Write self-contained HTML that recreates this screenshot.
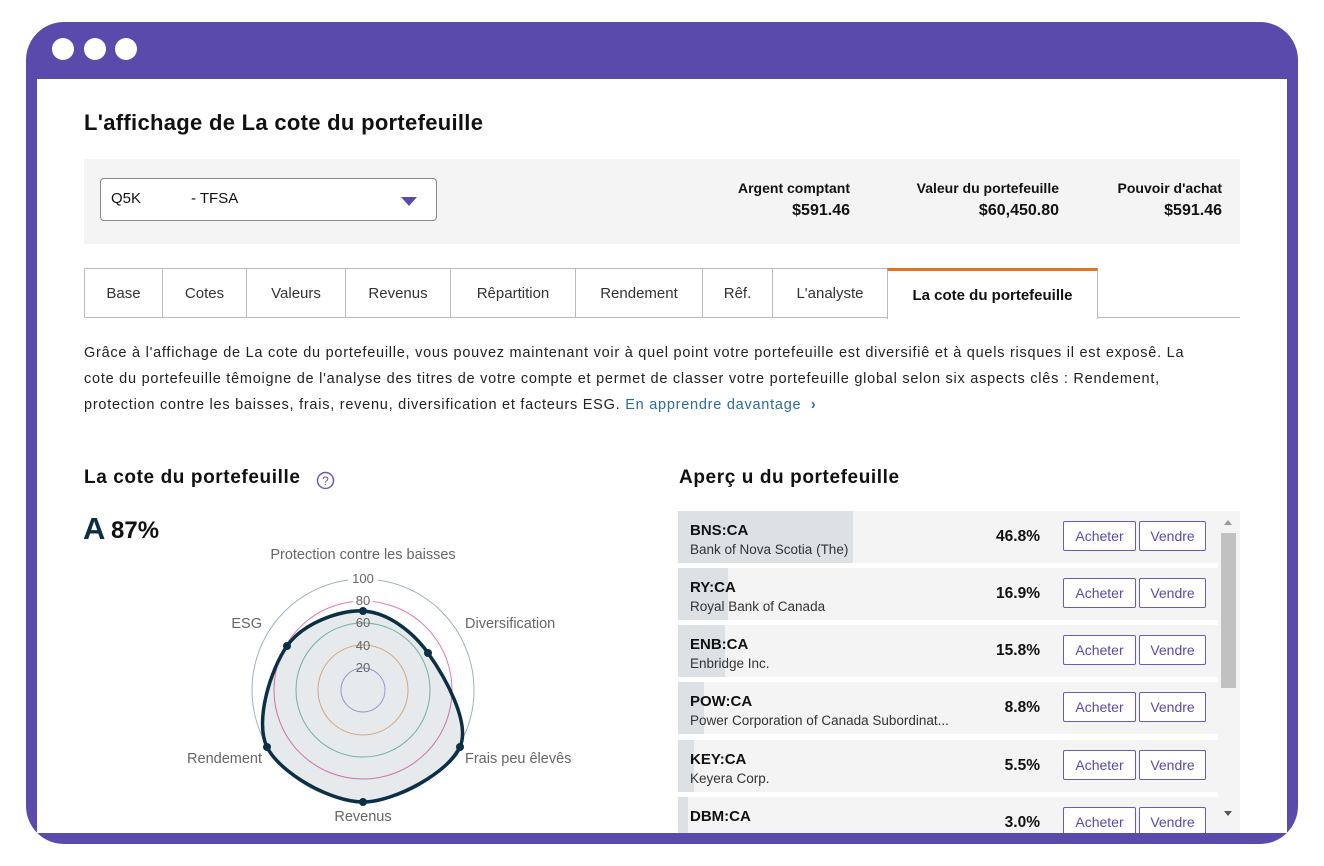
<!DOCTYPE html>
<html><head><meta charset="utf-8"><style>
*{box-sizing:border-box;margin:0;padding:0}
body{width:1324px;height:866px;background:#fff;font-family:"Liberation Sans",sans-serif;color:#111;position:relative;overflow:hidden}
.frame{position:absolute;left:26px;top:22px;width:1272px;height:822px;background:#5a4aab;border-radius:38px}
.inner{position:absolute;left:37px;top:79px;width:1250px;height:754px;background:#fff;overflow:hidden}
.dot{position:absolute;top:38px;width:22px;height:22px;border-radius:50%;background:#fff}
.abs{position:absolute;white-space:nowrap}
h1{position:absolute;left:84px;top:110px;font-size:22px;font-weight:bold;letter-spacing:0.3px}
.bar{position:absolute;left:84px;top:159px;width:1156px;height:85px;background:#f4f4f4}
.sel{position:absolute;left:100px;top:178px;width:337px;height:43px;border:1px solid #8a8a8a;border-radius:4px;background:#fff;font-size:15px}
.stat{position:absolute;text-align:right;font-size:14px;font-weight:bold}
.stat b{display:block;font-size:16px;margin-top:6px}
.tabs{position:absolute;left:84px;top:268px;height:50px;width:1156px;border-bottom:1px solid #bbb}
.tab{position:absolute;top:0;height:49px;border:1px solid #bbb;border-bottom:none;font-size:15px;color:#333;display:flex;align-items:center;justify-content:center;background:#fff}
.para{position:absolute;left:84px;top:340px;font-size:14.5px;line-height:26px;color:#222;letter-spacing:0.75px}
.para div{white-space:nowrap}
h2{position:absolute;font-size:19px;font-weight:bold;letter-spacing:0.6px}
.row{position:absolute;left:678px;width:540px;height:52px;background:#f4f4f4}
.fill{position:absolute;left:0;top:0;height:52px;background:#dde1e3}
.tk{position:absolute;left:12px;top:11px;font-size:15px;font-weight:bold}
.nm{position:absolute;left:12px;top:31px;font-size:13.5px;color:#333;white-space:nowrap}
.pc{position:absolute;right:178px;top:17px;font-size:15.5px;font-weight:bold}
.btn{position:absolute;top:10px;height:30px;border:1px solid #6a5ac0;border-radius:2px;background:#fff;color:#5a4aab;font-size:14px;display:flex;align-items:center;justify-content:center}
</style></head><body>
<div class="frame"></div>
<div class="dot" style="left:52px"></div><div class="dot" style="left:84px"></div><div class="dot" style="left:115px"></div>
<div class="inner"></div>

<h1>L'affichage de La cote du portefeuille</h1>
<div class="bar"></div>
<div class="sel"><span class="abs" style="left:10px;top:11px">Q5K</span><span class="abs" style="left:90px;top:11px">- TFSA</span>
<svg class="abs" style="left:300px;top:18px" width="16" height="9"><path d="M0 0H16L8 9Z" fill="#5a4aab"/></svg></div>
<div class="stat" style="right:474px;top:180px">Argent comptant<b>$591.46</b></div>
<div class="stat" style="right:265px;top:180px">Valeur du portefeuille<b>$60,450.80</b></div>
<div class="stat" style="right:102px;top:180px">Pouvoir d'achat<b>$591.46</b></div>

<div class="tabs">
<div class="tab" style="left:0;width:79px">Base</div>
<div class="tab" style="left:78px;width:85px">Cotes</div>
<div class="tab" style="left:162px;width:100px">Valeurs</div>
<div class="tab" style="left:261px;width:106px">Revenus</div>
<div class="tab" style="left:366px;width:126px">Rêpartition</div>
<div class="tab" style="left:491px;width:128px">Rendement</div>
<div class="tab" style="left:618px;width:71px">Rêf.</div>
<div class="tab" style="left:688px;width:116px">L'analyste</div>
<div class="tab" style="left:803px;width:211px;height:51px;border-top:3px solid #e8711f;font-weight:bold;color:#111">La cote du portefeuille</div>
</div>

<div class="para">
<div>Grâce à l'affichage de La cote du portefeuille, vous pouvez maintenant voir à quel point votre portefeuille est diversifiê et à quels risques il est exposê. La</div>
<div>cote du portefeuille têmoigne de l'analyse des titres de votre compte et permet de classer votre portefeuille global selon six aspects clês : Rendement,</div>
<div>protection contre les baisses, frais, revenu, diversification et facteurs ESG. <span style="color:#2b6c9e">En apprendre davantage &nbsp;<b>›</b></span></div>
</div>

<h2 style="left:84px;top:467px">La cote du portefeuille</h2>
<svg class="abs" style="left:316px;top:471px" width="19" height="19"><circle cx="9.5" cy="9.5" r="8" fill="none" stroke="#6a5ac0" stroke-width="1.5"/><text x="9.5" y="14" font-size="12" text-anchor="middle" fill="#6a5ac0" font-family="Liberation Sans">?</text></svg>
<div class="abs" style="left:83px;top:511px;font-size:31px;font-weight:bold;color:#0c2f45">A</div>
<div class="abs" style="left:111px;top:517px;font-size:24px;font-weight:bold">87%</div>

<svg class="abs" style="left:0;top:0" width="1324" height="866" font-family="Liberation Sans" >
<g fill="none" stroke-width="1">
<circle cx="363" cy="690" r="111" stroke="#9fb0bb"/>
<circle cx="363" cy="690" r="89" stroke="#e27ab8"/>
<circle cx="363" cy="690" r="67" stroke="#7fc0ad"/>
<circle cx="363" cy="690" r="45" stroke="#eab48a"/>
<circle cx="363" cy="690" r="22" stroke="#a9a4dc"/>
</g>
<path d="M363 611C386.5 612.2 411.8 630.3 428 653C444.2 675.7 470.8 722.2 460 747C449.2 771.8 395 802 363 802C331 802 279.7 773 267 747C254.3 721 271 668.7 287 646C303 623.3 339.5 609.8 363 611Z" fill="rgba(12,47,69,0.1)" stroke="#0c2f45" stroke-width="3.5"/>
<g fill="#0c2f45"><circle cx="363" cy="611" r="4"/><circle cx="428" cy="653" r="4"/><circle cx="460" cy="747" r="4"/><circle cx="363" cy="802" r="4"/><circle cx="267" cy="747" r="4"/><circle cx="287" cy="646" r="4"/></g>
<g font-size="13" fill="#666" text-anchor="middle">
<rect x="348" y="571" width="30" height="14" fill="#fff"/><text x="363" y="583">100</text>
<rect x="353" y="594" width="20" height="13" fill="#fff" opacity=".8"/><text x="363" y="605">80</text>
<text x="363" y="627">60</text><text x="363" y="650">40</text><text x="363" y="672">20</text>
</g>
<g font-size="14.5" fill="#666">
<text x="363" y="559" text-anchor="middle">Protection contre les baisses</text>
<text x="465" y="628">Diversification</text>
<text x="465" y="763">Frais peu êlevês</text>
<text x="363" y="821" text-anchor="middle">Revenus</text>
<text x="262" y="763" text-anchor="end">Rendement</text>
<text x="262" y="628" text-anchor="end">ESG</text>
</g>
</svg>

<h2 style="left:679px;top:467px">Aperç u du portefeuille</h2>
<div class="abs" style="left:678px;top:511px;width:562px;height:322px;overflow:hidden;background:#fff">
<div style="position:absolute;left:540px;top:0;width:22px;height:322px;background:#f4f4f4"></div>
<div style="position:absolute;left:543px;top:22px;width:15px;height:155px;background:#c1c1c1"></div>
<svg style="position:absolute;left:545px;top:8px" width="10" height="300"><path d="M1 6L5 1L9 6Z" fill="#999"/><path d="M1 292L5 297L9 292Z" fill="#555"/></svg>
</div>
<div class="abs" style="left:678px;top:511px;width:540px;height:322px;overflow:hidden">
<div class="row" style="left:0;top:0"><div class="fill" style="width:175px"></div><div class="tk">BNS:CA</div><div class="nm">Bank of Nova Scotia (The)</div><div class="pc">46.8%</div><div class="btn" style="left:385px;width:73px">Acheter</div><div class="btn" style="left:461px;width:67px">Vendre</div></div>
<div class="row" style="left:0;top:57px"><div class="fill" style="width:50px"></div><div class="tk">RY:CA</div><div class="nm">Royal Bank of Canada</div><div class="pc">16.9%</div><div class="btn" style="left:385px;width:73px">Acheter</div><div class="btn" style="left:461px;width:67px">Vendre</div></div>
<div class="row" style="left:0;top:114px"><div class="fill" style="width:47px"></div><div class="tk">ENB:CA</div><div class="nm">Enbridge Inc.</div><div class="pc">15.8%</div><div class="btn" style="left:385px;width:73px">Acheter</div><div class="btn" style="left:461px;width:67px">Vendre</div></div>
<div class="row" style="left:0;top:171px"><div class="fill" style="width:26px"></div><div class="tk">POW:CA</div><div class="nm">Power Corporation of Canada Subordinat...</div><div class="pc">8.8%</div><div class="btn" style="left:385px;width:73px">Acheter</div><div class="btn" style="left:461px;width:67px">Vendre</div></div>
<div class="row" style="left:0;top:229px"><div class="fill" style="width:16px"></div><div class="tk">KEY:CA</div><div class="nm">Keyera Corp.</div><div class="pc">5.5%</div><div class="btn" style="left:385px;width:73px">Acheter</div><div class="btn" style="left:461px;width:67px">Vendre</div></div>
<div class="row" style="left:0;top:286px"><div class="fill" style="width:10px"></div><div class="tk">DBM:CA</div><div class="nm"></div><div class="pc">3.0%</div><div class="btn" style="left:385px;width:73px">Acheter</div><div class="btn" style="left:461px;width:67px">Vendre</div></div>
</div>
</body></html>
